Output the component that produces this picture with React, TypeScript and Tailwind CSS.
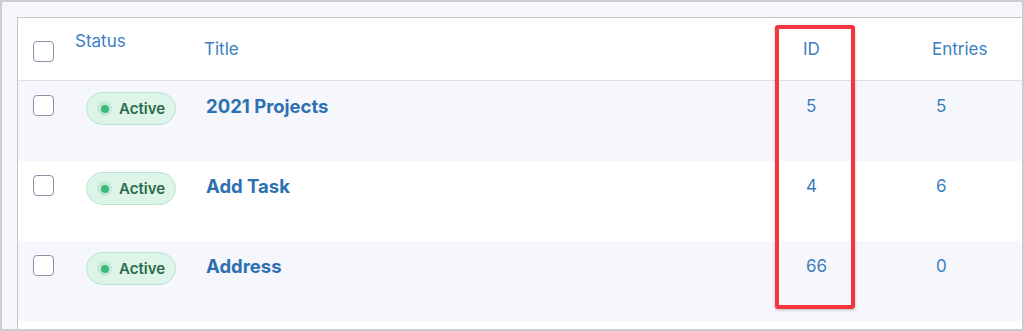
import React from "react";

interface Form {
  id: number;
  title: string;
  entries: number;
}

const forms: Form[] = [
  { id: 5, title: "2021 Projects", entries: 5 },
  { id: 4, title: "Add Task", entries: 6 },
  { id: 66, title: "Address", entries: 0 },
];

function Checkbox() {
  return <span className="block w-[21px] h-[21px] rounded-[4px] border-[1.5px] border-[#8e8fa8] bg-white" />;
}

function ActiveBadge() {
  return (
    <span className="flex items-center w-[90px] h-[33px] rounded-full border border-[#b6e6cd] bg-[#ddf4e8] pl-[10px]">
      <span className="flex items-center justify-center w-[15px] h-[15px] rounded-full bg-[#c2ead5]">
        <span className="block w-[8px] h-[8px] rounded-full bg-[#3bb97c]" />
      </span>
      <span className="ml-[7px] text-[15px] font-semibold text-[#2a6a4a] leading-none">Active</span>
    </span>
  );
}

export default function App() {
  return (
    <div
      className="relative w-[1024px] h-[331px] overflow-hidden border-2 border-[#cdcdd0] bg-[#f6f7fb] pl-[15px] pt-[15px]"
      style={{ fontFamily: "Inter, 'Noto Sans', sans-serif" }}
    >
      <div className="w-[1100px] border-l border-t border-[#c3c4c7] bg-white">
        {/* header */}
        <div className="flex h-[63px] border-b border-[#dcdded] text-[17px] leading-5 text-[#3b80c1]">
          <div className="w-[57px] pl-[15px] pt-[23px]">
            <Checkbox />
          </div>
          <div className="w-[129px] pt-[13px]">Status</div>
          <div className="w-[599px] pt-[21px]">Title</div>
          <div className="w-[129px] pt-[21px]">ID</div>
          <div className="pt-[21px]">Entries</div>
        </div>

        {forms.map((f, i) => (
          <div key={f.id} className={`flex h-[80px] pt-[11px] ${i % 2 === 0 ? "bg-[#f6f7fc]" : "bg-white"}`}>
            <div className="w-[57px] pl-[15px] pt-[3px]">
              <Checkbox />
            </div>
            <div className="w-[129px] pl-[11px]">
              <ActiveBadge />
            </div>
            <div className="w-[599px] pl-[2px] pt-[2px] text-[18.5px] leading-6 font-bold text-[#2d70b1]">{f.title}</div>
            <div className="w-[129px] pl-[3px] pt-[2px] text-[17px] leading-6 text-[#3b7ebf]">{f.id}</div>
            <div className="pl-[4px] pt-[2px] text-[17px] leading-6 text-[#3b7ebf]">{f.entries}</div>
          </div>
        ))}
        <div className="h-[40px] bg-white" />
      </div>

      {/* highlight around the ID column */}
      <div className="absolute left-[773px] top-[23px] w-[80px] h-[284px] rounded-[3px] border-4 border-[#f4343f] shadow-[0_1px_3px_rgba(0,0,0,0.25)]" />
    </div>
  );
}
